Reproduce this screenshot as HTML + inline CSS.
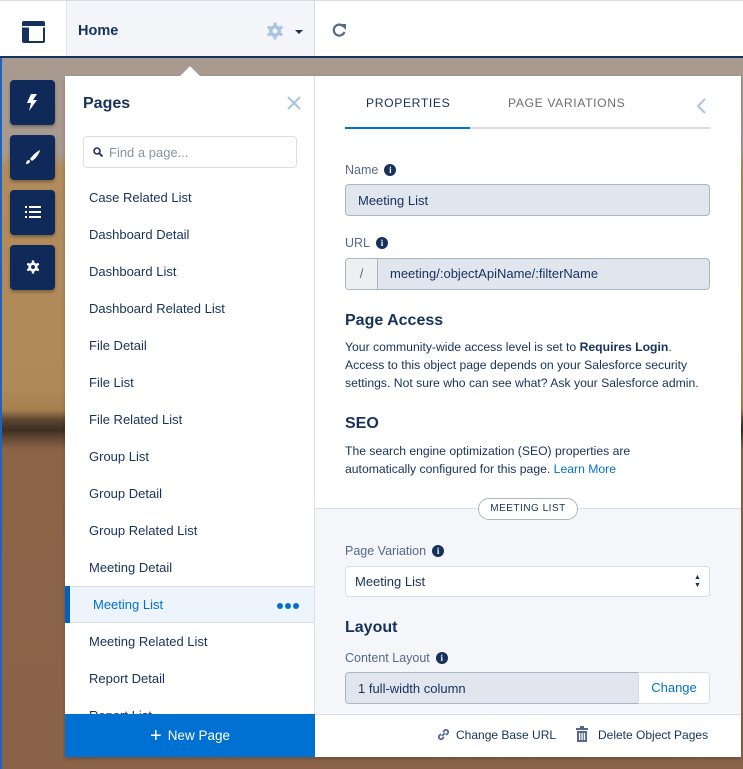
<!DOCTYPE html>
<html><head><meta charset="utf-8"><style>
*{box-sizing:border-box;margin:0;padding:0}
body{width:743px;height:769px;overflow:hidden;position:relative;font-family:"Liberation Sans",sans-serif;color:#16325c;background:#fff}
.abs{position:absolute}
.bg{left:0;top:58px;width:743px;height:711px;background:linear-gradient(180deg,#a99a90 0px,#a79a8e 95px,#b28c5c 110px,#b08958 330px,#a7804f 352px,#5a4532 362px,#3d2f22 372px,#6b4d37 382px,#8c6448 392px,#8a6247 711px)}
.top{left:0;top:0;width:743px;height:58px;background:#fff;border-top:1px solid #d8dde6}
.lbl{font-size:12.5px;color:#54698d}
.info{display:inline-block;width:12px;height:12px;border-radius:50%;background:#16325c;color:#fff;font-size:9px;font-weight:bold;text-align:center;line-height:12px;vertical-align:1px;margin-left:6px;font-family:"Liberation Serif",serif}
.item{position:absolute;left:89px;font-size:13px;color:#16325c}
.tool{position:absolute;left:10px;width:45px;height:45px;background:#0f2a59;border-radius:4px;box-shadow:0 2px 3px rgba(0,0,0,.3)}
.p{font-size:12.2px;line-height:18px;color:#16325c}
</style></head><body>
<div class="abs bg"></div>
<div class="abs" style="left:0;top:57px;width:2px;height:712px;background:#1a64c8"></div>
<div class="abs top">
  <svg class="abs" style="left:22px;top:20px" width="23" height="22" viewBox="0 0 23 22"><rect x="0" y="0" width="23" height="22" rx="2" fill="#16325c"/><rect x="7" y="6" width="14" height="14" fill="#fff"/><rect x="0" y="5" width="23" height="1.5" fill="#fff"/></svg>
  <div class="abs" style="left:66px;top:0;width:249px;height:56px;background:#f3f5f9;border-left:1px solid #e0e5ee;border-right:1px solid #d8dde6"></div>
  <div class="abs" style="left:78px;top:22px;font-size:14.5px;font-weight:bold">Home</div>
  <svg class="abs" style="left:266px;top:21px" width="18" height="18" viewBox="0 0 18 18"><g fill="#a8c4e0"><circle cx="9" cy="9" r="6"/><rect x="7.5" y="0.5" width="3" height="17"/><rect x="7.5" y="0.5" width="3" height="17" transform="rotate(60 9 9)"/><rect x="7.5" y="0.5" width="3" height="17" transform="rotate(120 9 9)"/></g><circle cx="9" cy="9" r="2.5" fill="#f3f5f9"/></svg>
  <div class="abs" style="left:295px;top:29px;border-left:4px solid transparent;border-right:4px solid transparent;border-top:4px solid #16325c"></div>
  <svg class="abs" style="left:331px;top:21px" width="17" height="16" viewBox="0 0 17 16"><path d="M12.5 4.5A5.5 5.5 0 1 0 13.5 10" fill="none" stroke="#54698d" stroke-width="2.2"/><path d="M9 2h6v6z" fill="#54698d"/></svg>
  <div class="abs" style="left:0;top:55px;width:743px;height:2px;background:#16325c"></div>
</div>
<div class="tool" style="top:80px"><svg style="margin:14px 0 0 16px" width="12" height="17" viewBox="0 0 12 17"><path d="M5 0h6L7 6h4L3 17l2-8H1z" fill="#fff"/></svg></div>
<div class="tool" style="top:135px"><svg style="margin:14px 0 0 15px" width="16" height="16" viewBox="0 0 16 16"><path d="M15 1C11 3 7 7 5 10l2 2c3-2 7-6 8-11zM4 11c-2 0-3 2-3 4 2 0 4-1 4-3z" fill="#fff"/></svg></div>
<div class="tool" style="top:190px"><svg style="margin:16px 0 0 15px" width="16" height="12" viewBox="0 0 16 12"><g fill="#fff"><rect x="0" y="0" width="2" height="2"/><rect x="4" y="0" width="12" height="2"/><rect x="0" y="5" width="2" height="2"/><rect x="4" y="5" width="12" height="2"/><rect x="0" y="10" width="2" height="2"/><rect x="4" y="10" width="12" height="2"/></g></svg></div>
<div class="tool" style="top:245px"><svg style="margin:15px 0 0 16px" width="14" height="14" viewBox="0 0 18 18"><g fill="#fff"><circle cx="9" cy="9" r="6"/><rect x="7.5" y="0.5" width="3" height="17"/><rect x="7.5" y="0.5" width="3" height="17" transform="rotate(60 9 9)"/><rect x="7.5" y="0.5" width="3" height="17" transform="rotate(120 9 9)"/></g><circle cx="9" cy="9" r="2.5" fill="#0f2a59"/></svg></div>

<div class="abs" style="left:65px;top:76px;width:676px;height:681px;background:#fff;box-shadow:0 2px 4px rgba(0,0,0,.2)"></div>
<div class="abs" style="left:183px;top:69px;width:14px;height:14px;background:#fff;transform:rotate(45deg)"></div>
<div class="abs" style="left:83px;top:95px;font-size:16px;font-weight:bold">Pages</div>
<svg class="abs" style="left:287px;top:96px" width="14" height="14" viewBox="0 0 14 14"><path d="M1 1L13 13M13 1L1 13" stroke="#a8c4e0" stroke-width="2"/></svg>
<div class="abs" style="left:83px;top:136px;width:214px;height:32px;border:1px solid #d8dde6;border-radius:4px"></div>
<svg class="abs" style="left:93px;top:147px" width="10" height="10" viewBox="0 0 10 10"><circle cx="4" cy="4" r="3" fill="none" stroke="#16325c" stroke-width="1.6"/><path d="M6 6l3.5 3.5" stroke="#16325c" stroke-width="1.8"/></svg>
<div class="abs" style="left:109px;top:145px;font-size:13px;color:#8593a6">Find a page...</div>
<div class="item" style="top:190px">Case Related List</div>
<div class="item" style="top:227px">Dashboard Detail</div>
<div class="item" style="top:264px">Dashboard List</div>
<div class="item" style="top:301px">Dashboard Related List</div>
<div class="item" style="top:338px">File Detail</div>
<div class="item" style="top:375px">File List</div>
<div class="item" style="top:412px">File Related List</div>
<div class="item" style="top:449px">Group List</div>
<div class="item" style="top:486px">Group Detail</div>
<div class="item" style="top:523px">Group Related List</div>
<div class="item" style="top:560px">Meeting Detail</div>
<div class="abs" style="left:65px;top:586px;width:250px;height:37px;background:#eef4fc;border-top:1px solid #d8dde6;border-bottom:1px solid #d8dde6"></div>
<div class="abs" style="left:65px;top:586px;width:5px;height:37px;background:#0060c0"></div>
<div class="item" style="top:597px;left:93px;color:#0070d2">Meeting List</div>
<div class="abs" style="left:277px;top:603px;font-size:0">
 <span style="display:inline-block;width:6px;height:6px;border-radius:50%;background:#0070d2;margin-right:2px"></span><span style="display:inline-block;width:6px;height:6px;border-radius:50%;background:#0070d2;margin-right:2px"></span><span style="display:inline-block;width:6px;height:6px;border-radius:50%;background:#0070d2"></span></div>
<div class="item" style="top:634px">Meeting Related List</div>
<div class="item" style="top:671px">Report Detail</div>
<div class="item" style="top:708px">Report List</div>
<div class="abs" style="left:65px;top:714px;width:250px;height:43px;background:#0070d2;color:#fff;font-size:13.5px;text-align:center;line-height:43px"><span style="font-size:20px;vertical-align:-2px;margin-right:6px">+</span>New Page</div>
<div class="abs" style="left:314px;top:76px;width:1px;height:638px;background:#d8dde6"></div>
<div class="abs" style="left:366px;top:96px;font-size:12.2px;letter-spacing:.6px">PROPERTIES</div>
<div class="abs" style="left:508px;top:96px;font-size:12.2px;letter-spacing:.6px;color:#6b6d70">PAGE VARIATIONS</div>
<svg class="abs" style="left:695px;top:97px" width="12" height="18" viewBox="0 0 12 18"><path d="M10 2L3 9l7 7" fill="none" stroke="#a8c4e0" stroke-width="2"/></svg>
<div class="abs" style="left:345px;top:127px;width:365px;height:2px;background:#d8dde6"></div>
<div class="abs" style="left:345px;top:127px;width:125px;height:2px;background:#0070d2"></div>
<div class="abs lbl" style="left:345px;top:163px">Name<span class="info">i</span></div>
<div class="abs" style="left:345px;top:184px;width:365px;height:32px;background:#e0e5ee;border:1px solid #a8b7c7;border-radius:4px;font-size:13px;padding:8px 12px">Meeting List</div>
<div class="abs lbl" style="left:345px;top:236px">URL<span class="info">i</span></div>
<div class="abs" style="left:345px;top:258px;width:365px;height:32px;background:#e0e5ee;border:1px solid #a8b7c7;border-radius:4px;overflow:hidden">
  <div class="abs" style="left:0;top:0;width:32px;height:30px;background:#eeeff1;border-right:1px solid #a8b7c7;font-size:13px;color:#54698d;text-align:center;line-height:30px">/</div>
  <div class="abs" style="left:44px;top:7px;font-size:13px">meeting/:objectApiName/:filterName</div>
</div>
<div class="abs" style="left:345px;top:312px;font-size:16px;font-weight:bold">Page Access</div>
<div class="abs p" style="left:345px;top:338px;width:370px">Your community-wide access level is set to <b>Requires Login</b>.<br>Access to this object page depends on your Salesforce security<br>settings. Not sure who can see what? Ask your Salesforce admin.</div>
<div class="abs" style="left:345px;top:415px;font-size:16px;font-weight:bold">SEO</div>
<div class="abs p" style="left:345px;top:442px;width:370px">The search engine optimization (SEO) properties are<br>automatically configured for this page. <span style="color:#0070d2">Learn More</span></div>
<div class="abs" style="left:315px;top:508px;width:426px;height:206px;background:#f4f6f9;border-top:1px solid #d8dde6"></div>
<div class="abs" style="left:478px;top:498px;width:100px;height:22px;background:#fff;border:1px solid #a8b7c7;border-radius:11px;font-size:10px;letter-spacing:.5px;text-align:center;line-height:20px">MEETING LIST</div>
<div class="abs lbl" style="left:345px;top:544px">Page Variation<span class="info">i</span></div>
<div class="abs" style="left:345px;top:566px;width:365px;height:31px;background:#fff;border:1px solid #d8dde6;border-radius:4px;font-size:13px;padding:7px 9px">Meeting List</div>
<div class="abs" style="left:694px;top:574px;font-size:7px;line-height:8px">▲<br>▼</div>
<div class="abs" style="left:345px;top:619px;font-size:16px;font-weight:bold">Layout</div>
<div class="abs lbl" style="left:345px;top:651px">Content Layout<span class="info">i</span></div>
<div class="abs" style="left:345px;top:672px;width:294px;height:32px;background:#e0e5ee;border:1px solid #a8b7c7;border-radius:4px 0 0 4px;font-size:13px;padding:8px 12px">1 full-width column</div>
<div class="abs" style="left:638px;top:672px;width:72px;height:32px;background:#fff;border:1px solid #d8dde6;border-radius:0 4px 4px 0;font-size:13px;color:#0070d2;text-align:center;line-height:30px">Change</div>
<div class="abs" style="left:315px;top:714px;width:426px;height:43px;background:#fff;border-top:1px solid #d8dde6"></div>
<svg class="abs" style="left:436px;top:727px" width="15" height="15" viewBox="0 0 15 15"><g fill="none" stroke="#54698d" stroke-width="1.8"><path d="M6 9l3-3"/><path d="M5 7L3 9a2.3 2.3 0 0 0 3 3l2-2"/><path d="M10 8l2-2a2.3 2.3 0 0 0-3-3L7 5"/></g></svg>
<div class="abs" style="left:456px;top:728px;font-size:12px">Change Base URL</div>
<svg class="abs" style="left:575px;top:726px" width="14" height="16" viewBox="0 0 14 16"><g fill="#54698d"><rect x="5" y="0" width="4" height="2"/><rect x="1" y="2" width="12" height="2"/><path d="M2 5h10v11H2z"/></g><g fill="#fff"><rect x="4" y="7" width="1.3" height="7"/><rect x="6.4" y="7" width="1.3" height="7"/><rect x="8.8" y="7" width="1.3" height="7"/></g></svg>
<div class="abs" style="left:598px;top:728px;font-size:12px">Delete Object Pages</div>
</body></html>
